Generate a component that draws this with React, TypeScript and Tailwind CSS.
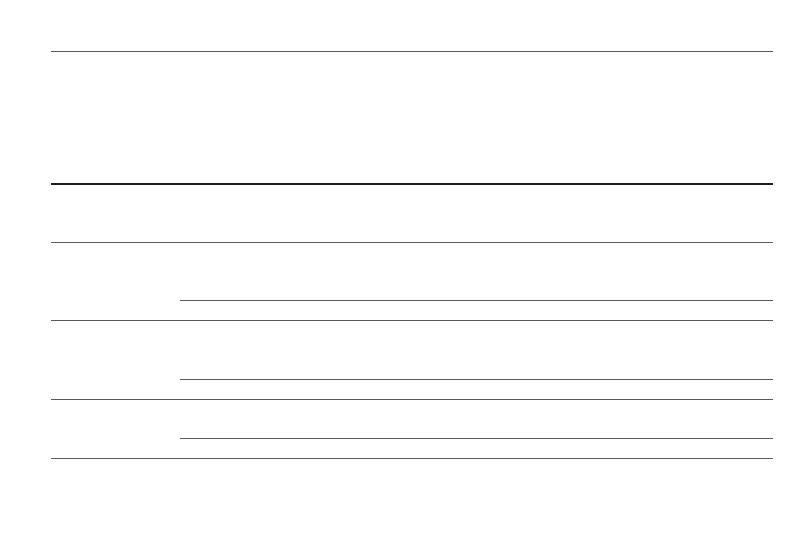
export default function App() {
  return (
    <div className="min-h-screen bg-white pt-[51px]">
      <div className="ml-[51px] w-[722px]">
        {/* header */}
        <div className="h-[134px] border-t border-b-2 border-t-[#5a5a5a] border-b-[#1e1e1e]" />

        {/* first row, full width */}
        <div className="h-[58px] border-b border-[#5a5a5a]" />

        <Group top={57} />
        <Group top={58} />
        <Group top={38} />
      </div>
    </div>
  );
}

function Group({ top }: { top: number }) {
  const topClass = top === 57 ? "h-[58px]" : top === 58 ? "h-[59px]" : "h-[39px]";
  return (
    <div className="flex">
      <div className="w-[129px] border-b border-[#5a5a5a]" />
      <div className="flex flex-1 flex-col">
        <div className={`flex ${topClass}`}>
          <div className="w-[512px] border-b border-[#5a5a5a]" />
          <div className="flex-1 border-b border-[#5a5a5a]" />
        </div>
        <div className="flex h-[20px]">
          <div className="w-[512px] border-b border-[#5a5a5a]" />
          <div className="flex-1 border-b border-[#5a5a5a]" />
        </div>
      </div>
    </div>
  );
}
